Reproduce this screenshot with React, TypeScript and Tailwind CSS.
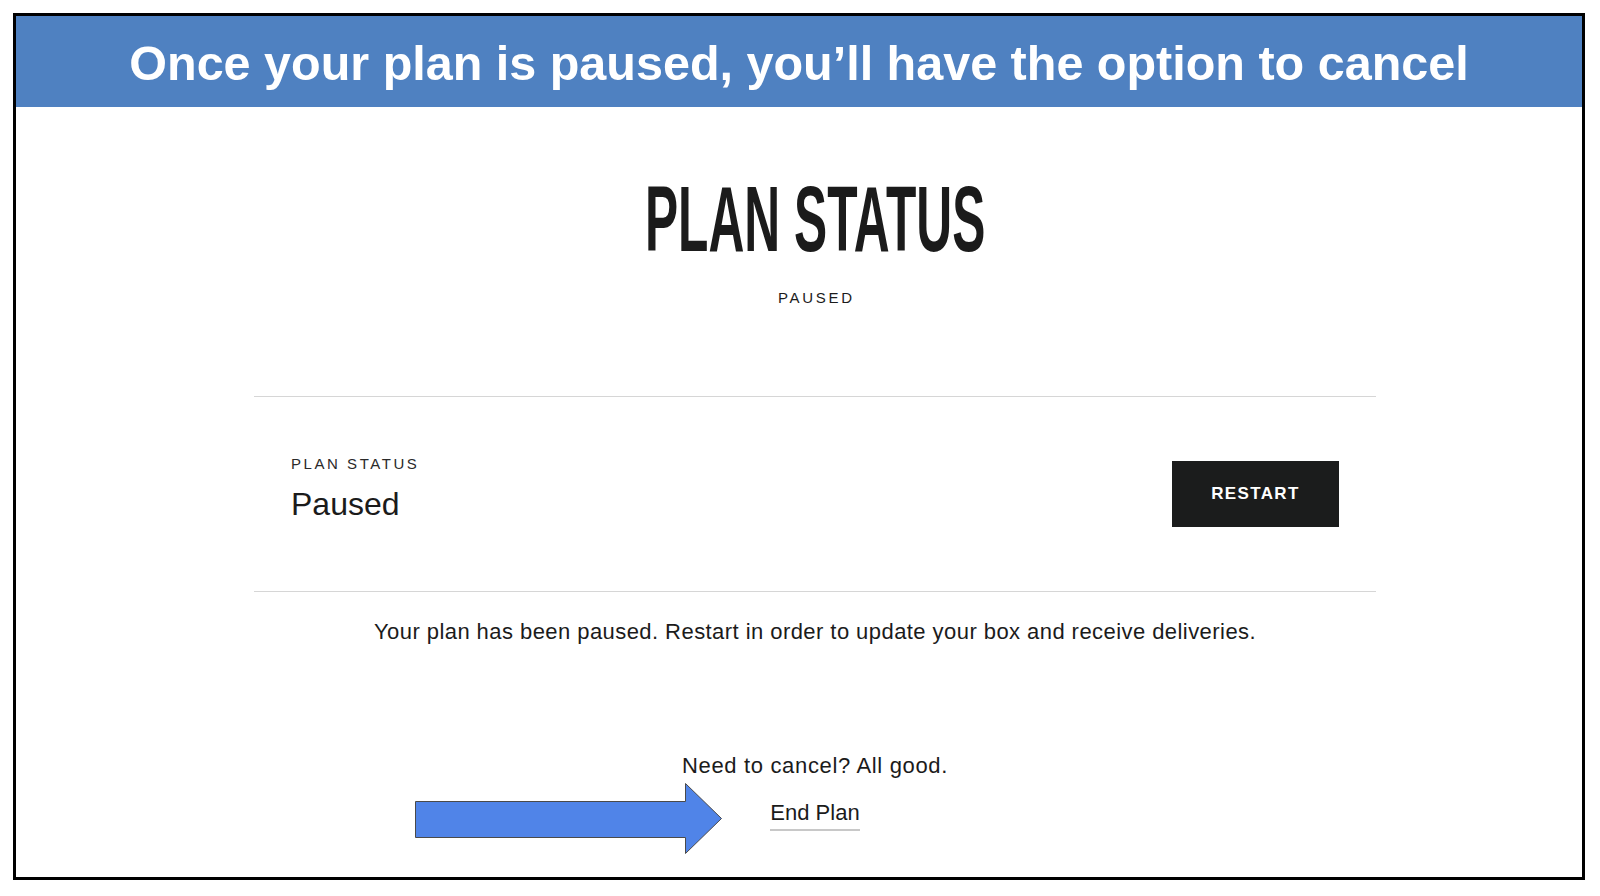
import React from 'react';

const sans = { fontFamily: '"Liberation Sans", Arial, sans-serif' };

function Arrow() {
  return (
    <svg
      className="absolute left-[399px] top-[767px]"
      width="310"
      height="74"
      viewBox="0 0 310 74"
    >
      <path
        d="M0.5 18.5 H270.5 V0.5 L306.5 35.5 L270.5 70.5 V54.5 H0.5 Z"
        fill="#5084e8"
        stroke="#4a4a4a"
        strokeWidth="1"
      />
    </svg>
  );
}

export default function App() {
  return (
    <div className="w-[1600px] h-[896px] bg-white pt-[13px] pl-[13px]" style={sans}>
      <div className="relative w-[1572px] h-[867px] border-[3px] border-black flex flex-col">
        <div className="h-[91px] bg-[#4f81c1] flex items-center justify-center pt-[3px]">
          <h1 className="text-white font-bold text-[48.5px] leading-none">
            Once your plan is paused, you’ll have the option to cancel
          </h1>
        </div>

        <div className="flex flex-col items-center pl-[238px] pr-[206px] text-[#1b1b1b]">
          <div className="mt-[66px] h-[92px] flex justify-center">
            <span className="inline-block text-[92px] leading-none font-bold scale-x-[0.54] whitespace-nowrap">
              PLAN STATUS
            </span>
          </div>
          <div className="mt-[25px] text-[15px] leading-none tracking-[0.18em] pl-[0.18em]">PAUSED</div>

          <div className="mt-[91px] w-full h-[196px] border-t border-b border-[#d6d6d6] px-[37px] flex items-center justify-between">
            <div className="flex flex-col pb-3">
              <span className="text-[15px] leading-none tracking-[0.17em] text-[#2a2a2a]">PLAN STATUS</span>
              <span className="mt-[17px] text-[32px] leading-none">Paused</span>
            </div>
            <button className="w-[167px] h-[66px] bg-[#1b1c1c] text-white font-bold text-[17px] tracking-[0.08em]">
              RESTART
            </button>
          </div>

          <p className="mt-[29px] text-[22px] leading-none tracking-[0.02em]">
            Your plan has been paused. Restart in order to update your box and receive deliveries.
          </p>

          <p className="mt-[112px] text-[22px] leading-none tracking-[0.03em]">Need to cancel? All good.</p>
          <a className="mt-[25px] text-[22px] leading-none pb-[5px] border-b-2 border-[#c8c8c8]">End Plan</a>
        </div>

        <Arrow />
      </div>
    </div>
  );
}
